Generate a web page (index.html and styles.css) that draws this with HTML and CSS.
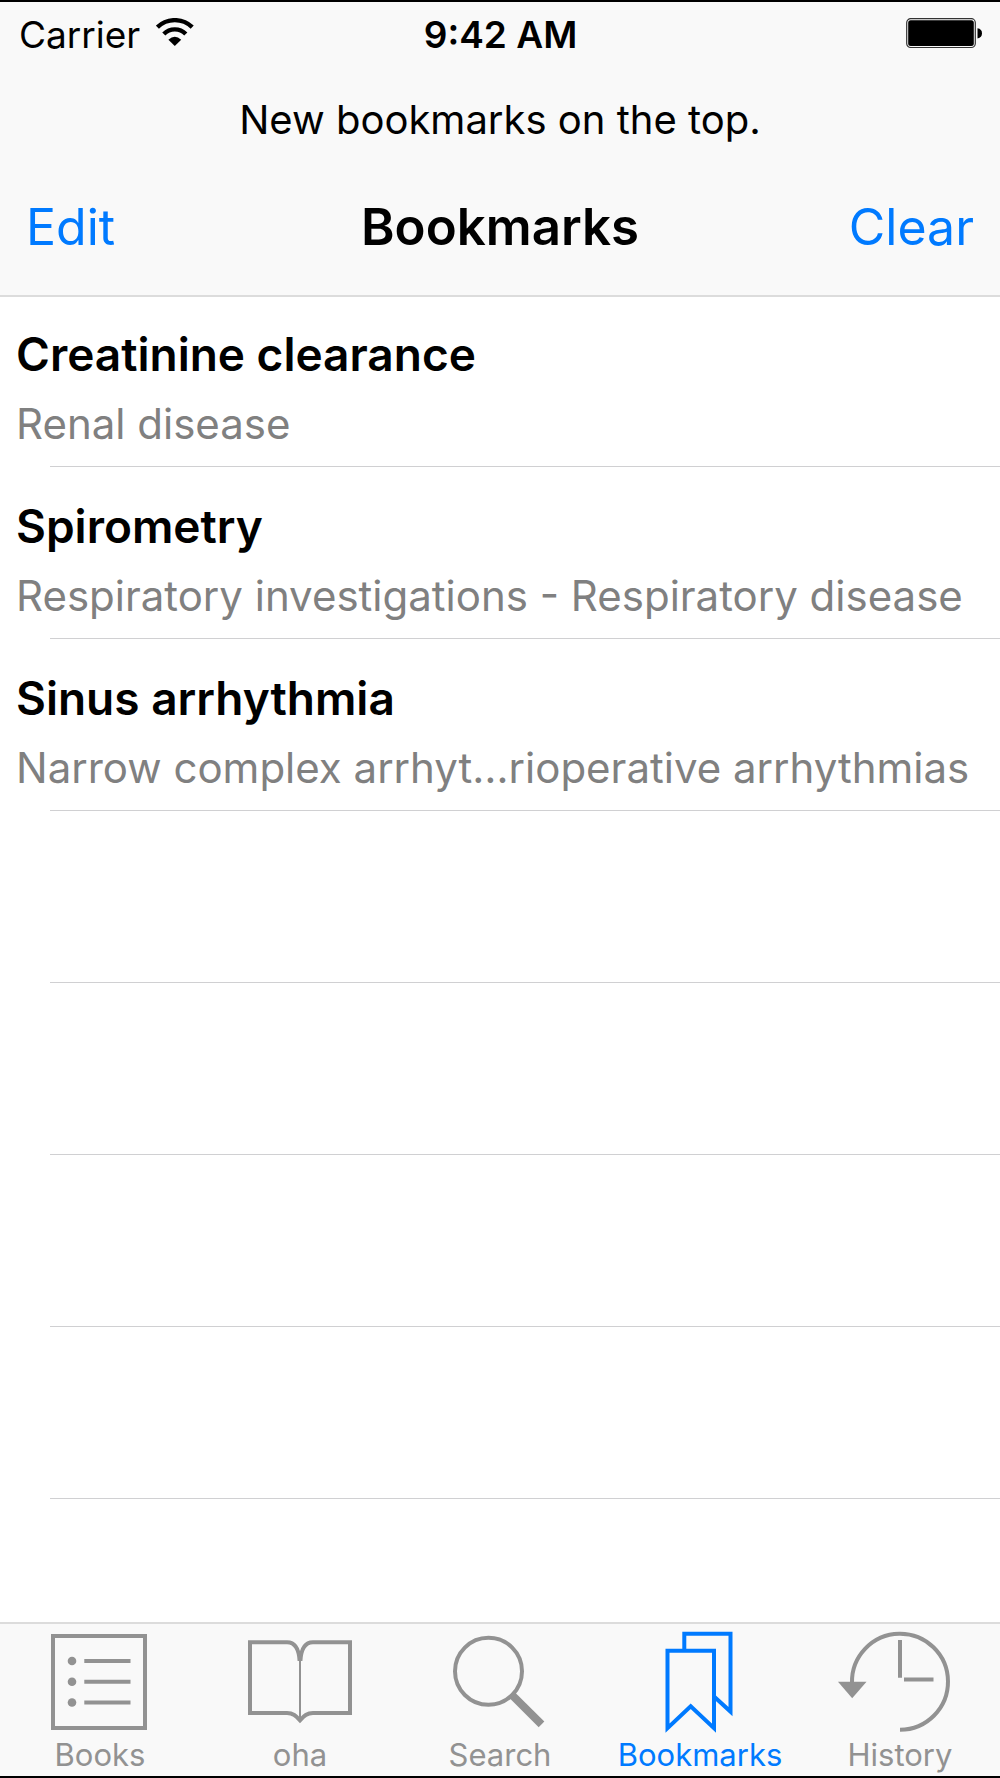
FILE: index.html
```html
<!DOCTYPE html>
<html lang="en">
<head>
    <meta charset="UTF-8">
    <meta name="viewport" content="width=device-width, initial-scale=1.0">
    <title>Bookmarks</title>
    <link rel="stylesheet" href="styles.css">
</head>
<body>
    <header class="header">
        <div class="status">
            <div class="carrier">
                <span>Carrier</span>
                <svg class="wifi" viewBox="0 0 38 32" fill="none" stroke="currentColor" stroke-width="4.4" aria-hidden="true">
                    <path d="M1.4 9.2A25 25 0 0 1 36.2 9.2"/>
                    <path d="M7.8 16A15.5 15.5 0 0 1 29.8 16"/>
                    <path d="M12.4 21.8Q18.8 15.8 25.2 21.8L18.8 28Z" fill="currentColor" stroke="none"/>
                </svg>
            </div>
            <time class="clock">9:42 AM</time>
            <svg class="battery" viewBox="0 0 76 32" aria-hidden="true">
                <rect x="0.7" y="0.7" width="68.6" height="28.8" rx="4" fill="none" stroke="#333" stroke-width="1.2"/>
                <rect x="2.2" y="2.2" width="65.6" height="25.8" rx="2.5"/>
                <path d="M71.5 10.2Q76 11 76 15.2T71.5 20.4Z"/>
            </svg>
        </div>
        <p class="note">New bookmarks on the top.</p>
        <div class="navbar">
            <button class="edit" type="button">Edit</button>
            <h1>Bookmarks</h1>
            <button class="clear" type="button">Clear</button>
        </div>
    </header>

    <main class="content">
        <ul class="list">
            <li class="row">
                <h2>Creatinine clearance</h2>
                <p>Renal disease</p>
            </li>
            <li class="row">
                <h2>Spirometry</h2>
                <p>Respiratory investigations - Respiratory disease</p>
            </li>
            <li class="row">
                <h2>Sinus arrhythmia</h2>
                <p>Narrow complex arrhyt…rioperative arrhythmias</p>
            </li>
            <li class="row"></li>
            <li class="row"></li>
            <li class="row"></li>
            <li class="row"></li>
        </ul>
    </main>

    <nav class="tabs">
        <a href="#books">
            <svg viewBox="-10 0 140 106" aria-hidden="true">
                <rect x="13" y="9" width="92" height="92"/>
                <path d="M44.3 34H90.5M44.3 54.7H90.5M44.3 75.5H90.5"/>
                <g class="solid">
                    <circle cx="32" cy="34" r="4.3"/>
                    <circle cx="32" cy="54.7" r="4.3"/>
                    <circle cx="32" cy="75.5" r="4.3"/>
                </g>
            </svg>
            <span>Books</span>
        </a>
        <a href="#oha">
            <svg viewBox="-10 0 140 106" aria-hidden="true">
                <path d="M59.6 34C59 22 55 15.2 47 15.2H10V86H47C53 86 56 89 60 93.3C64 89 67 86 73 86H110V15.2H73C65 15.2 61 22 60.4 34"/>
                <path d="M60 30V94" stroke-width="2"/>
            </svg>
            <span>oha</span>
        </a>
        <a href="#search">
            <svg viewBox="-10 0 140 106" aria-hidden="true">
                <circle cx="48.5" cy="44.3" r="33.5"/>
                <path class="handle" d="M72.5 68.5L101.5 97.3"/>
            </svg>
            <span>Search</span>
        </a>
        <a class="active" href="#bookmarks">
            <svg viewBox="-10 0 140 106" aria-hidden="true">
                <path d="M44.3 23.7V6.7H90.5V84.6L74 69.5"/>
                <path d="M27.5 23.7H74V101.2L50.7 79.3L27.5 101.2Z"/>
            </svg>
            <span>Bookmarks</span>
        </a>
        <a href="#history">
            <svg viewBox="-10 0 140 106" aria-hidden="true">
                <path d="M12 56A48 48 0 1 1 60 102.7"/>
                <path d="M60 13V50.7M64 52.5H93.5"/>
                <path class="solid" d="M-2 54.8H26.5L12.2 71.3Z"/>
            </svg>
            <span>History</span>
        </a>
    </nav>
</body>
</html>
```

FILE: styles.css
```css
* {
    box-sizing: border-box;
}
body {
    font-family: Inter, 'Liberation Sans', sans-serif;
    background: #fff;
    color: #000;
    margin: 0;
    height: 100vh;
    display: flex;
    flex-direction: column;
    border-top: 2px solid #000;
    border-bottom: 2px solid #000;
}
h1, h2, p, ul {
    margin: 0;
    padding: 0;
}
.header {
    position: relative;
    background: #f9f9f9;
    box-shadow: 0 2px 0 #dcdcdc;
}
.status {
    display: grid;
    grid-template-columns: 1fr auto 1fr;
    align-items: center;
    height: 64px;
    padding: 0 18px 0 19px;
    font-size: 37px;
}
.carrier {
    display: flex;
    align-items: center;
    gap: 16px;
}
.wifi {
    width: 38px;
    height: 32px;
}
.clock {
    font-weight: 600;
}
.battery {
    width: 76px;
    height: 32px;
    justify-self: end;
}
.note {
    padding: 30px 0;
    font-size: 40px;
    line-height: 48px;
    text-align: center;
}
.navbar {
    display: grid;
    grid-template-columns: 1fr auto 1fr;
    align-items: center;
    padding: 21px 26px 36px;
    line-height: 64px;
}
.navbar h1 {
    font-size: 51px;
    font-weight: 600;
}
.navbar button {
    padding: 0;
    border: none;
    background: none;
    color: #007aff;
    font-family: inherit;
    font-size: 50px;
    line-height: inherit;
    cursor: pointer;
}
.edit {
    justify-self: start;
}
.clear {
    justify-self: end;
}
.content {
    flex: 1;
    min-height: 0;
    overflow: hidden;
}
.list {
    list-style: none;
}
.row {
    display: flex;
    flex-direction: column;
    gap: 10px;
    height: 172px;
    padding: 29px 16px 0;
    line-height: 60px;
    white-space: nowrap;
}
/* separator starts past the text and runs to the right edge */
.row::after {
    content: "";
    height: 1px;
    margin: auto -16px 0 34px;
    background: #d0d0d2;
}
.row h2 {
    font-size: 46px;
    font-weight: 600;
}
.row p {
    font-size: 42px;
    color: #808080;
}
.tabs {
    display: grid;
    grid-template-columns: repeat(5, 1fr);
    background: #f9f9f9;
    border-top: 2px solid #dcdcdc;
    padding: 3px 0 1px;
}
.tabs a {
    display: flex;
    flex-direction: column;
    align-items: center;
    gap: 2px;
    color: #929292;
    font-size: 31px;
    line-height: 40px;
    text-decoration: none;
}
.tabs a.active {
    color: #007aff;
}
.tabs svg {
    width: 140px;
    height: 106px;
    fill: none;
    stroke: currentColor;
    stroke-width: 4;
}
.tabs .handle {
    stroke-width: 8;
}
.tabs .solid {
    fill: currentColor;
    stroke: none;
}
```
